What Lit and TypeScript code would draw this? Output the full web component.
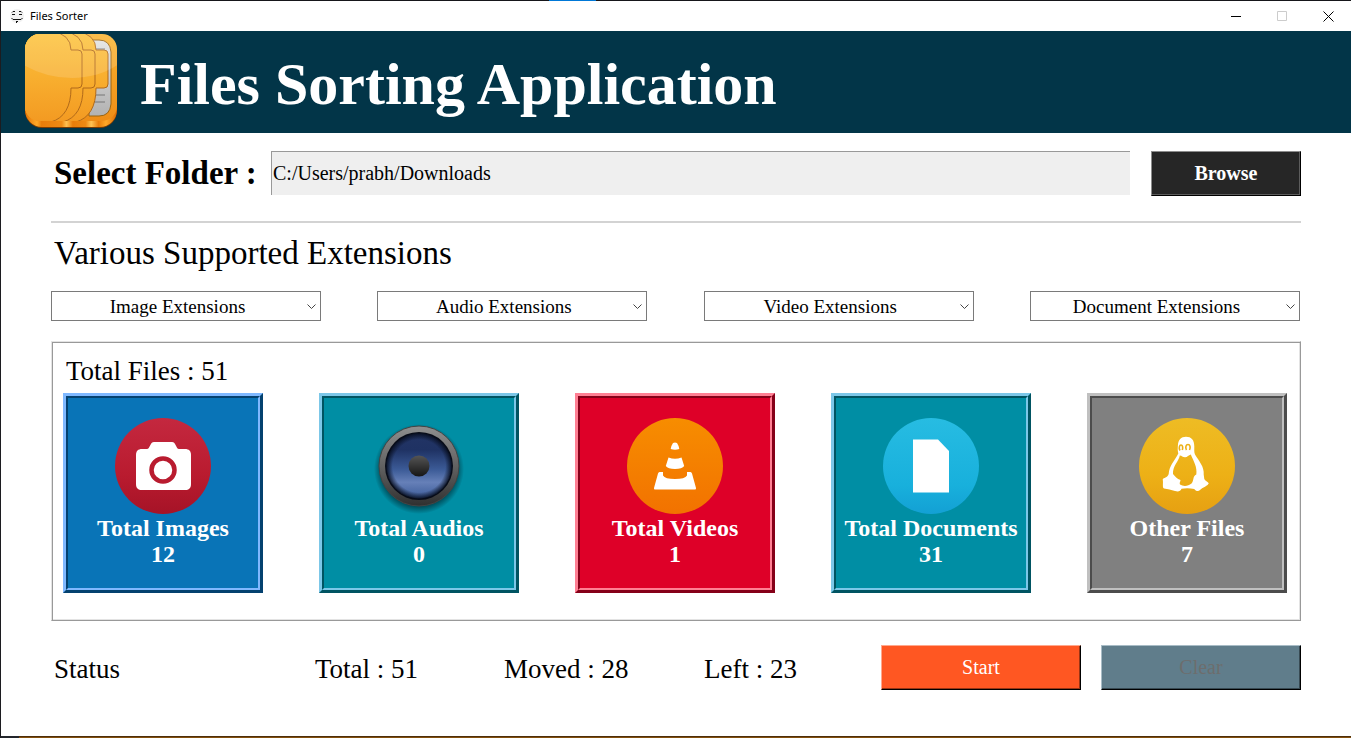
import { LitElement, html, css, svg } from "lit";
import { customElement, property, state } from "lit/decorators.js";

const cameraIcon = svg`
  <defs><linearGradient id="g" x1="0" y1="0" x2="0" y2="1"><stop offset="0" stop-color="#c4283f"/><stop offset=".6" stop-color="#b91b2f"/><stop offset="1" stop-color="#a61327"/></linearGradient></defs>
  <circle cx="48" cy="48" r="48" fill="url(#g)"/>
  <path fill="#fff" d="M27 31h5c3 0 3-7 7-7h18c4 0 4 7 7 7h6c4 0 6 2 6 6v29c0 4-2 6-6 6H27c-4 0-6-2-6-6V37c0-4 2-6 6-6z"/>
  <circle cx="48" cy="52" r="11.5" fill="#fff" stroke="#b91b2f" stroke-width="4.5"/>`;

const speakerIcon = svg`
  <defs>
    <linearGradient id="rim" x1="0" y1="0" x2="0" y2="1"><stop offset="0" stop-color="#8f8f8f"/><stop offset=".5" stop-color="#626262"/><stop offset="1" stop-color="#303030"/></linearGradient>
    <linearGradient id="cone" x1="0" y1="0" x2="0" y2="1"><stop offset="0" stop-color="#223465"/><stop offset=".25" stop-color="#1f3263"/><stop offset=".55" stop-color="#3b5a96"/><stop offset=".75" stop-color="#6680b8"/><stop offset="1" stop-color="#3c5b98"/></linearGradient>
    <radialGradient id="edge"><stop offset=".8" stop-color="#050a18" stop-opacity="0"/><stop offset="1" stop-color="#050a18" stop-opacity=".9"/></radialGradient>
    <radialGradient id="shade"><stop offset=".8" stop-color="#002830" stop-opacity=".75"/><stop offset="1" stop-color="#002830" stop-opacity="0"/></radialGradient>
    <linearGradient id="cap" x1="0" y1="0" x2="0" y2="1"><stop offset="0" stop-color="#555"/><stop offset="1" stop-color="#161616"/></linearGradient>
  </defs>
  <circle cx="48" cy="51" r="45" fill="url(#shade)"/>
  <circle cx="48" cy="48" r="40" fill="url(#rim)" stroke="#444" stroke-width="1"/>
  <circle cx="48" cy="48" r="34" fill="#080c18"/>
  <circle cx="48" cy="48" r="32.500" fill="url(#cone)"/>
  <circle cx="48" cy="48" r="33" fill="url(#edge)"/>
  <circle cx="48" cy="48" r="10.500" fill="url(#cap)"/>`;

const coneIcon = svg`
  <defs><linearGradient id="g" x1="0" y1="0" x2="0" y2="1"><stop offset="0" stop-color="#f78d00"/><stop offset="1" stop-color="#f27200"/></linearGradient></defs>
  <circle cx="48" cy="48" r="48" fill="url(#g)"/>
  <path fill="#fff" d="M46 25q2-1 4 0 1.500 2 2.300 6-4.300 1.500-8.600 0 .8-4 2.300-6zM41.500 39.500q6.500 2.500 13 0l2.700 8.500q-2 3-9.200 3t-9.200-3zM32.500 54h3.500v3.500q2 3.500 12 3.500t12-3.500V54h3.500q1 0 1.500 1.500l4 14.500q.3 1.500-1 1.500H28q-1.300 0-1-1.500l4-14.500q.5-1.500 1.500-1.500z"/>`;

const pageIcon = svg`
  <defs><linearGradient id="g" x1="0" y1="0" x2="0" y2="1"><stop offset="0" stop-color="#27bce2"/><stop offset=".7" stop-color="#18b0dc"/><stop offset="1" stop-color="#13a0d4"/></linearGradient></defs>
  <circle cx="48" cy="48" r="48" fill="url(#g)"/>
  <path fill="#fff" d="M30 21.500h25L66 33v41.500H30z"/>`;

const penguinIcon = svg`
  <defs><linearGradient id="g" x1="0" y1="0" x2="0" y2="1"><stop offset="0" stop-color="#eebc24"/><stop offset=".6" stop-color="#edb016"/><stop offset="1" stop-color="#e6a012"/></linearGradient></defs>
  <circle cx="48" cy="48" r="48" fill="url(#g)"/>
  <path fill="#fff" fill-rule="evenodd" d="M47 18.700C52.500 18.700 55.300 22 55.300 28.500 55.300 32 55 34 56 36.500 60 43 65.500 49 64.700 56.500L65.300 61C66 63 69 63.500 69.700 65.300 69.500 67.500 63 70 61 72 59.500 73.500 57 73.500 55.300 71 51 70 46 70 42.500 70.800 41.500 73.500 39 73.800 36 73 32 72 29 71 25 70.500 23 69.500 24.500 65 23.700 61.500 24.500 59.500 28.500 60 29.700 56 30 48 35.500 43 39.300 35.500 38.500 32 38.700 31 38.900 27.500 39.200 22 42 18.700 47 18.700zM40.800 37.500C40 43 33.500 48 34 56 36 58 38 61 41.500 62 41.500 64 40 64.500 41 66.500 44 68.500 49 68.500 52.500 65.500 55 63 53.500 58 57.300 56.500 58.500 49 54.500 43 51.800 36.500 49.500 37 48.500 39.300 46 39.300 43.500 39.300 43 37.500 40.800 37.500z"/>
  <path fill="none" stroke="#edb016" stroke-width="1.600" d="M41 32.500c-1.500-2.500-.5-5.500 1-5.500s2.200 2.500 1.300 5M47.500 32c-1.500-2.500-.5-5.500 1.500-5.500s2.800 3 1.500 5.500"/>`;

const folderIcon = svg`
  <defs>
    <linearGradient id="f" x1="0" y1="0" x2="0" y2="1"><stop offset="0" stop-color="#fdc43c"/><stop offset="1" stop-color="#f39a22"/></linearGradient>
    <linearGradient id="b" x1="0" y1="0" x2="0" y2="1"><stop offset="0" stop-color="#f8b42f"/><stop offset="1" stop-color="#ee8d17"/></linearGradient>
    <linearGradient id="l" x1="0" y1="0" x2="1" y2="0"><stop offset="0" stop-color="#e27406"/><stop offset=".13" stop-color="#ffa928"/><stop offset=".18" stop-color="#e87d0a"/><stop offset=".4" stop-color="#ee8a14"/><stop offset=".45" stop-color="#ffc050"/><stop offset=".52" stop-color="#e87d0a"/><stop offset=".66" stop-color="#ee8a14"/><stop offset=".72" stop-color="#ffc454"/><stop offset=".8" stop-color="#e87d0a"/><stop offset=".88" stop-color="#ffa928"/><stop offset="1" stop-color="#d96a05"/></linearGradient>
    <linearGradient id="p" x1="0" y1="0" x2="0" y2="1"><stop offset="0" stop-color="#e2e2e2"/><stop offset="1" stop-color="#b2b2b2"/></linearGradient>
    <clipPath id="c"><rect x="1" y="1" width="92" height="87" rx="15"/></clipPath>
  </defs>
  <rect x="1" y="4" width="92" height="91" rx="17" fill="#7a3c04"/>
  <rect x="1" y="2" width="92" height="92" rx="17" fill="url(#l)"/>
  <rect x="1" y="1" width="92" height="87" rx="15" fill="url(#b)"/>
  <path d="M65 7h10q11 0 12 12v52q-1 12-12 12H65z" fill="url(#p)" stroke="#9b640f" stroke-width="1"/>
  <path d="M69 16h12M69 62h12M69 69h12" stroke="#777"/>
  <g clip-path="url(#c)" fill="url(#f)" stroke="#b0691a" stroke-width="1">
    <path d="M-2-2H52q20 3 20 19h8q4 0 4 4v30q0 4-4 4h-8q0 28-20 34H-2z"/>
    <path d="M-2-2H39q20 3 20 19h8q4 0 4 4v30q0 4-4 4h-8q0 28-20 34H-2z"/>
    <path d="M-2-2H27q20 3 20 19h7q4 0 4 4v30q0 4-4 4h-7q0 28-20 34H-2z"/>
    <path d="M-2-2H95V31Q75 45 48 45T-2 31z" fill="#fff" opacity=".14" stroke="none"/>
  </g>`;

const faceIcon = svg`
  <circle cx="7" cy="7" r="7" fill="#f1f1f1"/>
  <path fill="none" stroke="#111" stroke-width="1" d="M2 3.500l1-1h2M9 2.500h2l1 1M2 5.500h3M9 5.500h3M1.500 9l1.500 1.500h8l1.500-1.500M6.500 12v2M7.500 12v1"/>`;

interface Category {
  tone: string;
  title: string;
  count: number;
  icon: unknown;
}

@customElement("count-card")
class CountCard extends LitElement {
  static styles = css`
    :host { display: block; }
    .card { border: 3px solid; box-sizing: border-box; height: 200px; }
    .inner {
      box-sizing: border-box; height: 100%; border: 2px solid; padding-top: 20px;
      display: flex; flex-direction: column; align-items: center;
      color: #fff; font-size: 24px; line-height: 26px; font-weight: bold; white-space: nowrap;
    }
    .icon { width: 96px; height: 96px; display: block; overflow: visible; margin-bottom: 1px; }
    .blue { background: #0974b7; --light: #7fb8ff; --dark: #04416f; }
    .teal { background: #008ea4; --light: #7cc7e8; --dark: #005462; }
    .red { background: #de0028; --light: #ff7f93; --dark: #850018; }
    .gray { background: #808080; --light: #c0c0c0; --dark: #4c4c4c; }
    .card { border-color: var(--light) var(--dark) var(--dark) var(--light); }
    .inner { border-color: var(--dark) var(--light) var(--light) var(--dark); }
  `;
  @property({ attribute: false }) category!: Category;

  render() {
    const c = this.category;
    return html`<div class="card ${c.tone}">
      <div class="inner">
        <svg class="icon" viewBox="0 0 96 96" aria-hidden="true">${c.icon}</svg>
        <span>${c.title}</span>
        <span>${c.count}</span>
      </div>
    </div>`;
  }
}

@customElement("app-root")
class AppRoot extends LitElement {
  static styles = css`
    :host {
      display: flex; flex-direction: column; min-height: 100vh; box-sizing: border-box;
      border-left: 1px solid #1c1c20; background: #fff; color: #000;
      font-family: "Liberation Serif", "Times New Roman", serif;
    }
    .edge { height: 1px; background: #16161a; display: flex; justify-content: center; }
    .accent { width: 47px; background: #0078d7; margin-right: 208px; }
    .bar { height: 30px; display: flex; align-items: center; padding-left: 9px; }
    .face { width: 14px; height: 14px; }
    .caption { flex: 1; margin-left: 6px; font: 11px/16px "Noto Sans", "Segoe UI", sans-serif; }
    .win { width: 46px; height: 30px; padding: 0; border: 0; background: none; display: grid; place-items: center; color: #000; }
    .win:disabled { color: #ccc; }
    .win svg { width: 11px; height: 11px; fill: none; stroke: currentColor; }
    .banner { height: 102px; background: #023548; display: flex; align-items: center; padding-left: 23px; gap: 22px; }
    .logo { width: 94px; height: 98px; }
    h1 { margin: 0; padding-top: 4px; color: #fff; font-size: 60px; line-height: 68px; white-space: nowrap; }
    main { flex: 1; padding: 18px 50px; display: flex; flex-direction: column; }
    .folder { display: flex; }
    .folder label { font-size: 33px; line-height: 44px; font-weight: bold; padding-left: 3px; width: 217px; white-space: nowrap; }
    .path {
      flex: 1; min-width: 0; height: 44px; box-sizing: border-box; padding: 0 1px; margin-right: 21px;
      border: 0 solid #999; border-width: 1px 0 0 1px; border-radius: 0; background: #efefef;
      font: 20px "Liberation Serif", serif; color: #000; outline: 0;
    }
    .btn {
      height: 45px; width: 100%; border: 1px solid; border-radius: 0; padding: 0;
      font: 20px "Liberation Serif", serif; color: #fff;
    }
    .browse { width: 150px; font-weight: bold; background: #262626; border-color: #8c8c8c #000 #000 #8c8c8c; box-shadow: inset -1px -1px #5c5c5c; }
    .start { background: #ff5722; border-color: #ffa88d #000 #000 #ffa88d; box-shadow: inset -1px -1px #983414; }
    .clear { background: #607d8b; border-color: #a8bcc6 #000 #000 #a8bcc6; box-shadow: inset -1px -1px #384a53; color: #6d6d6d; }
    hr { width: 100%; height: 2px; margin: 25px 0 0; border: 0; background: #d3d3d3; }
    h2 { margin: 10px 0 0 3px; font-size: 33px; line-height: 40px; font-weight: normal; }
    .filters { display: flex; justify-content: space-between; margin-top: 18px; padding-right: 1px; }
    .filter { display: grid; width: 270px; align-items: center; }
    .filter select, .filter svg { grid-area: 1 / 1; }
    .filter select {
      appearance: none; width: 100%; height: 30px; padding: 0 17px 0 0; border: 1px solid #7a7a7a; border-radius: 0;
      background: #fff; color: #000; font: 19px "Liberation Serif", serif; text-align: center; text-align-last: center;
    }
    .filter svg { justify-self: end; width: 9px; height: 6px; margin: 2px 5px 0 0; fill: none; stroke: #444; pointer-events: none; }
    .panel { margin-top: 20px; padding: 11px 12px 27px 10px; border: 1px solid; border-color: #e3e3e3 #999 #999 #e3e3e3; box-shadow: inset 1px 1px #999, inset -1px -1px #e3e3e3; }
    .total { margin: 0; padding: 0 4px; font-size: 27px; line-height: 36px; }
    .cards { display: flex; justify-content: space-between; margin-top: 4px; padding: 0 1px; }
    count-card { width: 200px; }
    .status { display: grid; grid-template-columns: 261fr 189fr 200fr 200fr 200px 200px; margin-top: 24px; font-size: 27px; line-height: 48px; white-space: nowrap; }
    .status span { padding-left: 3px; }
    .actions { grid-column: 5 / 7; display: flex; gap: 20px; margin-left: -20px; }
    .bottom { height: 2px; display: flex; background: linear-gradient(#4c2e0c 50%, #84500c 50%); }
    .corner { width: 18px; background: #23262c; }
  `;

  @state() private path = "C:/Users/prabh/Downloads";

  private filters = ["Image Extensions", "Audio Extensions", "Video Extensions", "Document Extensions"];

  private categories: Category[] = [
    { tone: "blue", title: "Total Images", count: 12, icon: cameraIcon },
    { tone: "teal", title: "Total Audios", count: 0, icon: speakerIcon },
    { tone: "red", title: "Total Videos", count: 1, icon: coneIcon },
    { tone: "teal", title: "Total Documents", count: 31, icon: pageIcon },
    { tone: "gray", title: "Other Files", count: 7, icon: penguinIcon },
  ];

  render() {
    return html`
      <div class="edge"><span class="accent"></span></div>
      <div class="bar">
        <svg class="face" viewBox="0 0 14 14" aria-hidden="true">${faceIcon}</svg>
        <span class="caption">Files Sorter</span>
        <button class="win" aria-label="Minimize"><svg viewBox="0 0 11 11"><path d="M0 5.500h10" /></svg></button>
        <button class="win" aria-label="Maximize" disabled><svg viewBox="0 0 11 11"><path d="M.5 .5h9v9h-9z" /></svg></button>
        <button class="win" aria-label="Close"><svg viewBox="0 0 11 11"><path d="M.5 .5l10 10M10.500 .5l-10 10" /></svg></button>
      </div>
      <header class="banner">
        <svg class="logo" viewBox="0 0 94 98" aria-hidden="true">${folderIcon}</svg>
        <h1>Files Sorting Application</h1>
      </header>
      <main>
        <div class="folder">
          <label for="path">Select Folder :</label>
          <input class="path" id="path" readonly .value=${this.path} />
          <button class="btn browse">Browse</button>
        </div>
        <hr />
        <h2>Various Supported Extensions</h2>
        <div class="filters">
          ${this.filters.map((f) => html`<div class="filter">
            <select aria-label=${f}><option>${f}</option></select>
            <svg viewBox="0 0 9 6" aria-hidden="true"><path d="M.5 .5l4 4 4-4" /></svg>
          </div>`)}
        </div>
        <section class="panel">
          <p class="total">Total Files : 51</p>
          <div class="cards">
            ${this.categories.map((c) => html`<count-card .category=${c}></count-card>`)}
          </div>
        </section>
        <div class="status">
          <span>Status</span>
          <span>Total : 51</span>
          <span>Moved : 28</span>
          <span>Left : 23</span>
          <div class="actions">
            <button class="btn start">Start</button>
            <button class="btn clear" disabled>Clear</button>
          </div>
        </div>
      </main>
      <div class="bottom"><span class="corner"></span></div>
    `;
  }
}
